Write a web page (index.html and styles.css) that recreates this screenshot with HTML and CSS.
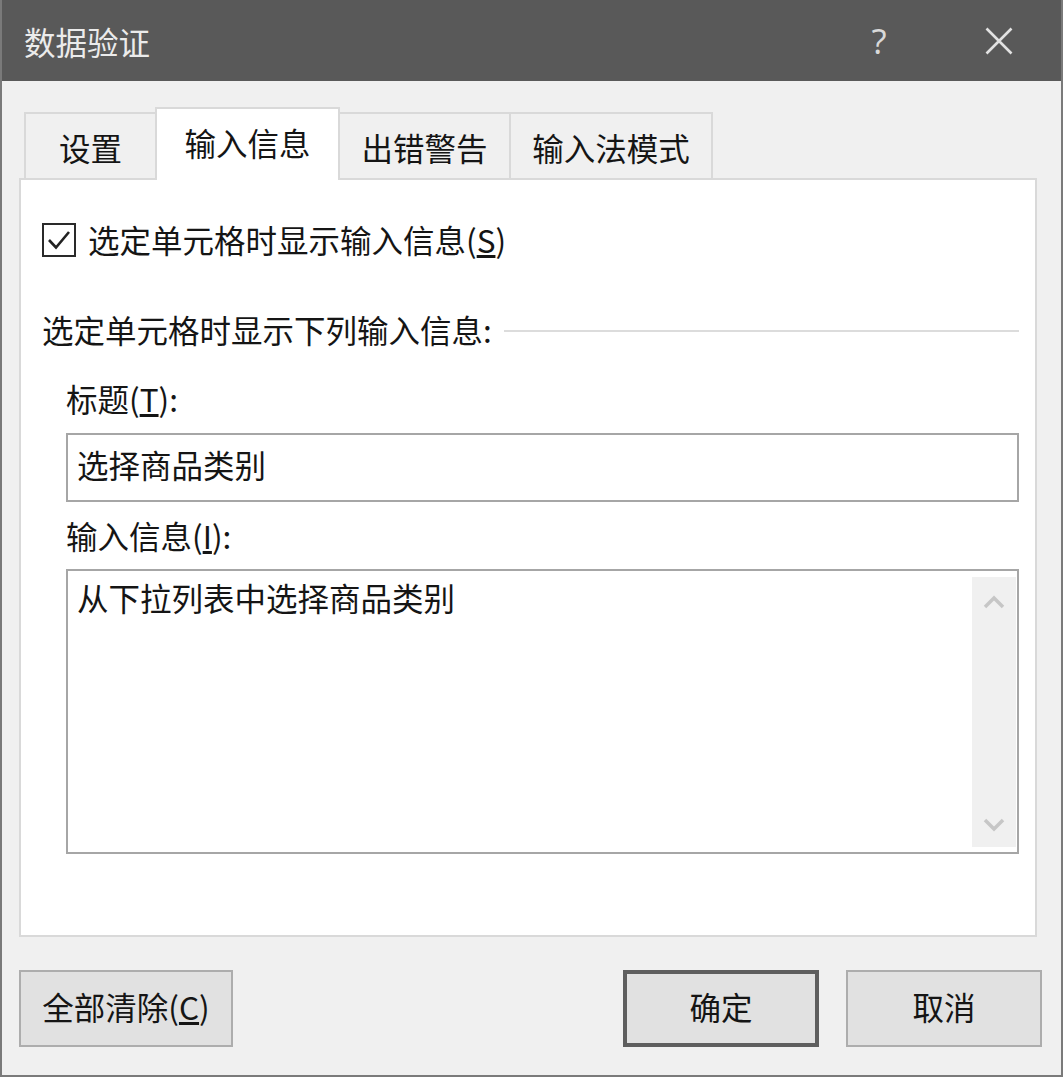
FILE: index.html
```html
<!DOCTYPE html>
<html lang="zh-CN">
<head>
<meta charset="utf-8">
<title>数据验证</title>
<link rel="stylesheet" href="styles.css">
</head>
<body>
<div class="window">
  <div class="titlebar">
    <div class="title">数据验证</div>
    <div class="tb-btn help">?</div>
    <div class="tb-btn close">
      <svg width="28" height="28" viewBox="0 0 28 28"><path d="M1.5 1.5 L26.5 26.5 M26.5 1.5 L1.5 26.5" stroke="#e2e2e2" stroke-width="2.6" fill="none"/></svg>
    </div>
  </div>
  <div class="body">
    <div class="tabs">
      <div class="tab first t1">设置</div>
      <div class="tab active t2">输入信息</div>
      <div class="tab t3">出错警告</div>
      <div class="tab t4">输入法模式</div>
    </div>
    <div class="panel">
      <div class="cb-row">
        <span class="checkbox">
          <svg width="30" height="30" viewBox="0 0 30 30"><path d="M5 15 L12 22.5 L25 7" stroke="#222" stroke-width="2.6" fill="none"/></svg>
        </span>
        <span class="cb-label">选定单元格时显示输入信息(<u>S</u>)</span>
      </div>
      <div class="group-row">
        <span class="group-label">选定单元格时显示下列输入信息:</span>
        <span class="group-line"></span>
      </div>
      <div class="field-label">标题(<u>T</u>):</div>
      <div class="input">选择商品类别</div>
      <div class="field-label second">输入信息(<u>I</u>):</div>
      <div class="textarea">
        <div class="ta-text">从下拉列表中选择商品类别</div>
        <div class="scrollbar">
          <svg width="22" height="14" viewBox="0 0 22 14"><path d="M2 12 L11 3 L20 12" stroke="#c6c6c6" stroke-width="3.5" fill="none"/></svg>
          <svg width="22" height="14" viewBox="0 0 22 14"><path d="M2 2 L11 11 L20 2" stroke="#c6c6c6" stroke-width="3.5" fill="none"/></svg>
        </div>
      </div>
    </div>
    <div class="footer">
      <div class="btn clear">全部清除(<u>C</u>)</div>
      <div class="btn ok">确定</div>
      <div class="btn cancel">取消</div>
    </div>
  </div>
</div>
</body>
</html>
```
FILE: styles.css
```css
html, body {
  margin: 0;
  padding: 0;
  background: #ffffff;
}
body {
  font-family: "Noto Sans CJK SC", "Noto Sans", sans-serif;
  font-size: 31.5px;
  color: #151515;
}
.window {
  width: 1063px;
  height: 1077px;
  box-sizing: border-box;
  border: 2px solid #7a7a7a;
  border-top: 0;
  background: #f0f0f0;
  display: flex;
  flex-direction: column;
}
.titlebar {
  height: 81px;
  flex: none;
  background: #595959;
  display: flex;
  align-items: center;
  padding-left: 22px;
  padding-right: 12px;
  color: #ebebeb;
}
.title {
  flex: 1;
  line-height: 40px;
}
.tb-btn {
  width: 100px;
  height: 81px;
  display: flex;
  align-items: center;
  justify-content: center;
}
.help {
  font-family: "Open Sans", "Noto Sans", sans-serif;
  font-size: 35px;
  color: #d9d9d9;
}
.close {
  margin-left: 20px;
}
.body {
  flex: 1;
  padding: 26px 23px 28px 17px;
  display: flex;
  flex-direction: column;
}
.tabs {
  height: 71px;
  flex: none;
  display: flex;
  align-items: flex-end;
  padding-left: 5px;
  position: relative;
  z-index: 2;
}
.tab {
  height: 66px;
  box-sizing: border-box;
  border-top: 2px solid #d9d9d9;
  border-right: 2px solid #d9d9d9;
  background: #f0f0f0;
  display: flex;
  align-items: center;
  justify-content: center;
  padding-top: 2px;
  line-height: 40px;
}
.tab.first {
  border-left: 2px solid #d9d9d9;
}
.tab.active {
  height: 73px;
  margin-bottom: -2px;
  margin-left: -2px;
  border-left: 2px solid #d9d9d9;
  background: #ffffff;
  padding-top: 0;
  padding-bottom: 6px;
}
.t1 { width: 133px; }
.t2 { width: 185px; }
.t3 { width: 171px; }
.t4 { width: 202px; }
.panel {
  width: 1018px;
  height: 759px;
  flex: none;
  box-sizing: border-box;
  border: 2px solid #d9d9d9;
  background: #ffffff;
  padding: 0 16px 0 21px;
  display: flex;
  flex-direction: column;
}
.cb-row {
  margin-top: 43px;
  height: 34px;
  display: flex;
  align-items: center;
}
.checkbox {
  width: 34px;
  height: 34px;
  box-sizing: border-box;
  border: 2.5px solid #2a2a2a;
  display: flex;
  align-items: center;
  justify-content: center;
}
.cb-label {
  margin-left: 12px;
  line-height: 40px;
  margin-bottom: 3px;
}
.group-row {
  margin-top: 53px;
  height: 40px;
  display: flex;
  align-items: center;
  line-height: 40px;
}
.group-label {
  margin-bottom: 2px;
}
.group-line {
  flex: 1;
  height: 2px;
  background: #dcdcdc;
  margin-left: 12px;
  margin-top: 2px;
}
.field-label {
  margin-top: 28px;
  padding-left: 24px;
  line-height: 40px;
  height: 42px;
}
.field-label.second {
  margin-top: 13px;
}
.input {
  margin-top: 13px;
  margin-left: 24px;
  height: 69px;
  box-sizing: border-box;
  border: 2px solid #a6a6a6;
  display: flex;
  align-items: center;
  padding-left: 9px;
  padding-bottom: 7px;
  line-height: 40px;
}
.textarea {
  margin-top: 12px;
  margin-left: 24px;
  height: 285px;
  box-sizing: border-box;
  border: 2px solid #a6a6a6;
  display: flex;
}
.ta-text {
  flex: 1;
  padding: 6px 9px;
  line-height: 40px;
}
.scrollbar {
  width: 44px;
  margin: 6px 1px 5px 0;
  background: #f0f0f0;
  display: flex;
  flex-direction: column;
  align-items: center;
  justify-content: space-between;
  padding: 18px 0 15px;
  box-sizing: border-box;
}
.footer {
  margin-top: 33px;
  margin-right: -4px;
  display: flex;
}
.btn {
  height: 77px;
  box-sizing: border-box;
  border: 2px solid #adadad;
  background: #e1e1e1;
  display: flex;
  align-items: center;
  justify-content: center;
  line-height: 40px;
  padding-bottom: 5px;
}
.clear {
  width: 214px;
}
.ok {
  width: 196px;
  margin-left: auto;
  border: 4px solid #5e5e5e;
}
.cancel {
  width: 196px;
  margin-left: 27px;
}
```
